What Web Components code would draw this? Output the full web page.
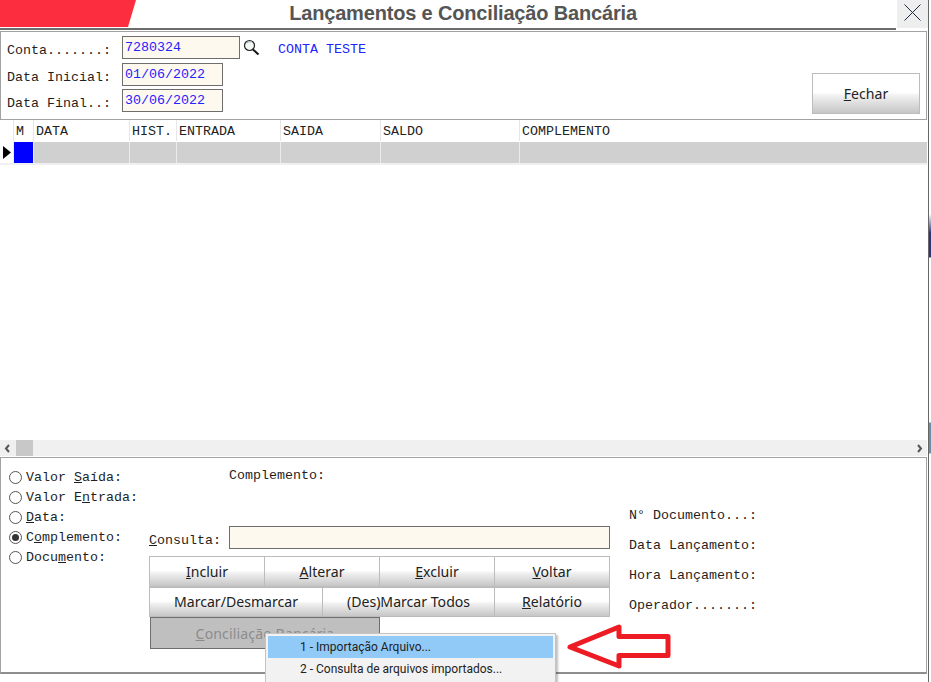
<!DOCTYPE html>
<html><head><meta charset="utf-8"><style>
html,body{margin:0;padding:0;background:#fff;overflow:hidden}
body{width:931px;height:682px}
</style></head><body>
<app-window></app-window>
<script>
const MONO='font-family:"Liberation Mono",monospace;font-size:13.33px;';
const def=(n,html)=>customElements.define(n,class extends HTMLElement{
 constructor(){super();this.attachShadow({mode:'open'}).innerHTML=html;}
});
def('title-bar',`<style>
:host{display:flex;height:28px;border-bottom:2px solid #6d6d6d;position:relative;background:#fff;box-sizing:content-box}
.red{width:136px;height:27px;background:#fb2d3e;clip-path:polygon(0 0,136px 0,128px 100%,0 100%)}
h1{flex:1;margin:0;font:bold 20px "Liberation Sans",sans-serif;color:#555;text-align:center;line-height:26px;padding-right:106px;letter-spacing:-.17px}
.x{width:32px;height:30px;margin-bottom:-2px;background:linear-gradient(#eee 28px,#fff 28px);display:flex;align-items:center;justify-content:center;box-sizing:border-box;padding-bottom:6px;border-left:1px solid #fff}
</style><div class="red"></div><h1>Lançamentos e Conciliação Bancária</h1><div class="x"><svg width="17" height="17" viewBox="0 0 17 17"><path d="M.5.5l16 16M16.500.5l-16 16" stroke="#1c2a4a" fill="none" stroke-width="1"/></svg></div>`);

def('field-row',`<style>
:host{display:flex;align-items:flex-start;${MONO}color:#1f1f1f;}
.l{width:115px;padding-top:7px;white-space:pre;line-height:15px}
</style><span class="l"><slot name="label"></slot></span><slot></slot>`);

def('text-box',`<style>
:host{display:inline-block;box-sizing:border-box;height:23px;border:1px solid #6e6e6e;background:#fef9ef;color:#2323ff;${MONO}line-height:15px;padding:3px 2px 0;white-space:pre}
</style><slot></slot>`);

def('mag-icon',`<style>:host{display:block;width:17px;height:17px}</style><svg width="17" height="17" viewBox="0 0 17 17"><circle cx="6.500" cy="6.500" r="5" fill="#f4f8f4" stroke="#222" stroke-width="1.200"/><path d="M4 4a3.500 3.500 0 0 1 4-1" stroke="#9ab" fill="none"/><path d="M10 10.500l5.500 5" stroke="#111" stroke-width="2"/></svg>`);

def('win-btn',`<style>
:host{display:flex;align-items:center;justify-content:center;box-sizing:border-box;border:1px solid #bcbcbc;background:linear-gradient(#fff 0,#fff 47%,#f1f1f1 55%,#c6c6c6 100%);font:14.1px "Noto Sans",sans-serif;color:#222;white-space:nowrap;padding-bottom:1px}
:host([disabled]){background:#bfbfbf;border:1px solid #6e6e6e;color:#8c8c8c;padding-bottom:0;letter-spacing:.12px}
</style><slot></slot>`);

def('header-panel',`<style>
:host{display:flex;box-sizing:border-box;height:89px;margin:1px 1px 0 0;border:1px solid #a2a2a2;background:#fff;padding:4px 6px 0 6px;position:relative}
.col{display:flex;flex-direction:column;flex:1}
.r1{height:27px}.r2{height:26px}
.name{color:#2323ff;${MONO}padding:6px 0 0 18px;line-height:15px}
.mag{margin:3px 0 0 3px}
win-btn{align-self:flex-start;width:108px;height:41px;margin-top:37px}
</style><div class="col">
<field-row class="r1"><span slot="label">Conta.......:</span><text-box style="width:118px">7280324</text-box><mag-icon class="mag"></mag-icon><span class="name">CONTA TESTE</span></field-row>
<field-row class="r2"><span slot="label">Data Inicial:</span><text-box style="width:101px">01/06/2022</text-box></field-row>
<field-row><span slot="label">Data Final..:</span><text-box style="width:101px">30/06/2022</text-box></field-row>
</div><win-btn><span><u>F</u>echar</span></win-btn>`);

def('data-grid',`<style>
:host{display:block;height:320px;background:#fff;${MONO}color:#222}
.g{display:grid;grid-template-columns:13px 19px 95px 46px 103px 99px 138px 407px;column-gap:1px;width:927px}
.h{grid-template-rows:21px;height:21px}
.h span{padding:3px 0 0 2px;line-height:18px;box-sizing:border-box;box-shadow:-1px 0 0 #e6e6e6;overflow:hidden;white-space:nowrap}
.r{height:21px;background:#d0d0d0;margin-top:1px}
.r div{background:#d0d0d0;box-shadow:-1px 0 0 #ececec}
.r .a{background:#fff;box-shadow:none;display:flex;align-items:center;padding-left:3px}
.r .b{background:#0000ff}
.u{height:2px;background:#f0f0f0;width:927px}
</style><div class="g h"><span style="box-shadow:none"></span><span>M</span><span>DATA</span><span>HIST.</span><span>ENTRADA</span><span>SAIDA</span><span>SALDO</span><span>COMPLEMENTO</span></div>
<div class="g r"><div class="a"><svg width="8" height="13"><path d="M0 0l8 6.500-8 6.500z" fill="#000"/></svg></div><div class="b"></div><div></div><div></div><div></div><div></div><div></div><div></div></div><div class="u"></div>`);

def('scroll-bar',`<style>
:host{display:flex;align-items:center;height:16px;background:#f0f0f0;margin-right:1px}
svg{display:block;margin:0 4px}
.t{width:17px;height:16px;background:#c8c8c8;margin-left:1px}
.s{flex:1}
</style><svg width="7" height="9" viewBox="0 0 7 9"><path d="M5 1L2 4.500 5 8" fill="none" stroke="#555" stroke-width="2"/></svg><div class="t"></div><div class="s"></div><svg width="7" height="9" viewBox="0 0 7 9"><path d="M2 1l3 3.500L2 8" fill="none" stroke="#555" stroke-width="2"/></svg>`);

def('radio-opt',`<style>
:host{display:flex;align-items:center;height:20px;${MONO}color:#1f1f1f;white-space:pre}
i{box-sizing:border-box;width:13px;height:13px;border:1px solid #555;border-radius:50%;margin-right:4px;display:flex;align-items:center;justify-content:center;background:#fff}
:host([checked]) i::after{content:"";width:7px;height:7px;border-radius:50%;background:#333}
</style><i></i><slot></slot>`);

def('bottom-panel',`<style>
:host{display:block;box-sizing:border-box;height:217px;margin:1px 1px 0 0;border:1px solid #a2a2a2;border-bottom:2px solid #8e8e8e;position:relative;background:#fff;${MONO}color:#1f1f1f}
.wrap{display:grid;grid-template-columns:148px 461px 1fr;height:100%}
.radios{padding:9px 0 0 8px}
.mid{display:flex;flex-direction:column}
.compl{padding:10px 0 0 80px;line-height:15px;height:58px}
.cons{display:flex;align-items:center;height:23px;white-space:pre}
.cons span{width:80px;padding-top:5px}
.cons text-box{flex:1}
.btns{margin-top:7px;display:flex;flex-direction:column;width:461px}
.line{display:flex;height:31px}
.line win-btn{margin-left:-1px}
.line win-btn:first-child{margin-left:0}
.concil{width:230px;height:32px;margin:0 0 0 1px;padding-top:1px}
.info{padding:50px 0 0 19px;line-height:15px;white-space:pre;display:flex;flex-direction:column;gap:15px}
</style><div class="wrap">
<div class="radios">
<radio-opt>Valor <u>S</u>aída:</radio-opt>
<radio-opt>Valor E<u>n</u>trada:</radio-opt>
<radio-opt><u>D</u>ata:</radio-opt>
<radio-opt checked>C<u>o</u>mplemento:</radio-opt>
<radio-opt>Docu<u>m</u>ento:</radio-opt>
</div>
<div class="mid">
<div class="compl">Complemento:</div>
<div class="cons"><span><u>C</u>onsulta:</span><text-box></text-box></div>
<div class="btns">
<div class="line"><win-btn style="width:116px"><span><u>I</u>ncluir</span></win-btn><win-btn style="width:116px"><span><u>A</u>lterar</span></win-btn><win-btn style="width:116px"><span><u>E</u>xcluir</span></win-btn><win-btn style="width:116px"><span><u>V</u>oltar</span></win-btn></div>
<div class="line" style="height:30px"><win-btn style="width:174px"><span>Marcar/Desmarcar</span></win-btn><win-btn style="width:173px"><span>(Des)Marcar Todos</span></win-btn><win-btn style="width:116px"><span><u>R</u>elatório</span></win-btn></div>
<win-btn class="concil" disabled><span><u>C</u>onciliação Bancária</span></win-btn>
</div></div>
<div class="info"><span>N° Documento...:</span><span>Data Lançamento:</span><span>Hora Lançamento:</span><span>Operador.......:</span></div>
</div>`);

def('pop-menu',`<style>
:host{display:block;position:absolute;left:265px;top:633px;width:291px;height:49px;box-sizing:border-box;background:#f2f2f2;border:1px solid #c4c4c4;border-bottom:0;box-shadow:2px 2px 2px rgba(0,0,0,.25);font:12px Roboto,sans-serif;color:#222;padding:2px 2px 0 2px}
.i{height:22px;line-height:22px;padding-left:32px}
.i.on{background:#91c9f7}
.i+.i{height:23px;line-height:23px}
</style><div class="i on">1 - Importação Arquivo...</div><div class="i">2 - Consulta de arquivos importados...</div>`);

def('red-arrow',`<style>:host{display:block;position:absolute;left:565px;top:620px;width:108px;height:52px}</style><svg width="108" height="52" viewBox="0 0 108 52"><path d="M5 27L54 7v9.500h49v19H54V46z" fill="#fff" stroke="#ed1c24" stroke-width="5" stroke-linejoin="round"/></svg>`);

def('app-window',`<style>
:host{display:flex;width:931px;height:682px;background:#fff;position:relative;overflow:hidden}
.main{width:928px;flex:none;display:flex;flex-direction:column}
.edge{width:1px;background:#666;flex:none}
.desk{width:2px;background:linear-gradient(#fff 0,#fff 214px,#33337a 233px,#33337a 257px,#fff 258px,#fff 422px,#6a8fa8 423px,#6a8fa8 453px,#fff 454px)}
</style><div class="main"><title-bar></title-bar><header-panel></header-panel><data-grid></data-grid><scroll-bar></scroll-bar><bottom-panel></bottom-panel></div><div class="edge"></div><div class="desk"></div><pop-menu></pop-menu><red-arrow></red-arrow>`);
</script></body></html>
